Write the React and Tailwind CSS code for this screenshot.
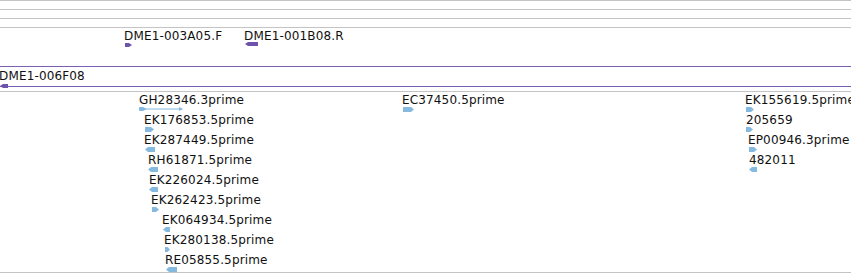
import React from 'react';

const BLUE = '#86b9df';
const PURPLE = '#6f52ab';

// small feature glyph: a box with a pointed end showing strand
const Glyph = ({ x, y, w, dir, color, h = 5 }) => {
  const t = Math.min(3, w / 2);
  const pts =
    dir === 'r'
      ? `0,0 ${w - t},0 ${w},${h / 2} ${w - t},${h} 0,${h}`
      : `${t},0 ${w},0 ${w},${h} ${t},${h} 0,${h / 2}`;
  return (
    <svg className="absolute" style={{ left: x, top: y }} width={w} height={h}>
      <polygon points={pts} fill={color} />
    </svg>
  );
};

const Label = ({ x, y, children }) => (
  <div
    className="absolute whitespace-nowrap text-[12px] leading-[14px] tracking-[0.15px] text-[#111] font-['DejaVu_Sans',sans-serif]"
    style={{ left: x, top: y }}
  >
    {children}
  </div>
);

const estRows = [
  { label: 'EK176853.5prime', lx: 144, gx: 145, w: 9, dir: 'r' },
  { label: 'EK287449.5prime', lx: 144, gx: 145, w: 10, dir: 'l' },
  { label: 'RH61871.5prime', lx: 148, gx: 148, w: 10, dir: 'l' },
  { label: 'EK226024.5prime', lx: 149, gx: 149, w: 9, dir: 'l' },
  { label: 'EK262423.5prime', lx: 151, gx: 152, w: 7, dir: 'r' },
  { label: 'EK064934.5prime', lx: 162, gx: 163, w: 7, dir: 'l' },
  { label: 'EK280138.5prime', lx: 164, gx: 165, w: 5, dir: 'r' },
  { label: 'RE05855.5prime', lx: 165, gx: 166, w: 11, dir: 'l' },
];

const rightRows = [
  { label: 'EK155619.5prime', lx: 745, gx: 746, w: 8, dir: 'r' },
  { label: '205659', lx: 746, gx: 746, w: 7, dir: 'r' },
  { label: 'EP00946.3prime', lx: 748, gx: 749, w: 8, dir: 'r' },
  { label: '482011', lx: 749, gx: 749, w: 8, dir: 'l' },
];

export default function App() {
  return (
    <div className="w-[851px] h-[275px] bg-white overflow-hidden flex flex-col">
      {/* collapsed tracks */}
      <div className="h-[9px] border-t border-[#c4c4c4]" />
      <div className="h-[9px] border-t border-[#c4c4c4]" />
      <div className="h-[9px] border-t border-[#c4c4c4]" />

      {/* clone track */}
      <div className="relative h-[64px] border-t border-[#c4c4c4]">
        <Label x={124} y={1}>DME1-003A05.F</Label>
        <Glyph x={125} y={15} w={7} h={4} dir="r" color={PURPLE} />
        <Label x={244} y={1}>DME1-001B08.R</Label>
        <Glyph x={245} y={14} w={13} h={4} dir="l" color={PURPLE} />

        <div className="absolute left-0 right-0 top-[38px] h-px bg-[#7a5fb4]" />
        <Label x={-1} y={41}>DME1-006F08</Label>
        <div className="absolute left-0 right-0 top-[58px] h-px bg-[#7a5fb4]" />
        <Glyph x={0} y={56} w={8} h={4} dir="l" color={PURPLE} />
      </div>

      {/* EST track */}
      <div className="relative h-[182px] border-t border-b border-[#c4c4c4]">
        <Label x={139} y={1}>GH28346.3prime</Label>
        <svg className="absolute" style={{ left: 139, top: 15 }} width={46} height={5}>
          <polygon points="0,0 4,2 0,4" fill={BLUE} />
          <polygon points="0,0 3,0 7,2 3,4 0,4" fill={BLUE} transform="translate(1,0)" />
          <rect x={7} y={1.5} width={36} height={1} fill={BLUE} />
          <polygon points="40,0 44,2 40,4" fill={BLUE} />
        </svg>

        {estRows.map((r, i) => (
          <React.Fragment key={r.label}>
            <Label x={r.lx} y={1 + 20 * (i + 1)}>{r.label}</Label>
            <Glyph x={r.gx} y={15 + 20 * (i + 1)} w={r.w} dir={r.dir} color={BLUE} />
          </React.Fragment>
        ))}

        <Label x={402} y={1}>EC37450.5prime</Label>
        <Glyph x={403} y={15} w={11} dir="r" color={BLUE} />

        {rightRows.map((r, i) => (
          <React.Fragment key={r.label}>
            <Label x={r.lx} y={1 + 20 * i}>{r.label}</Label>
            <Glyph x={r.gx} y={15 + 20 * i} w={r.w} dir={r.dir} color={BLUE} />
          </React.Fragment>
        ))}
      </div>
    </div>
  );
}
